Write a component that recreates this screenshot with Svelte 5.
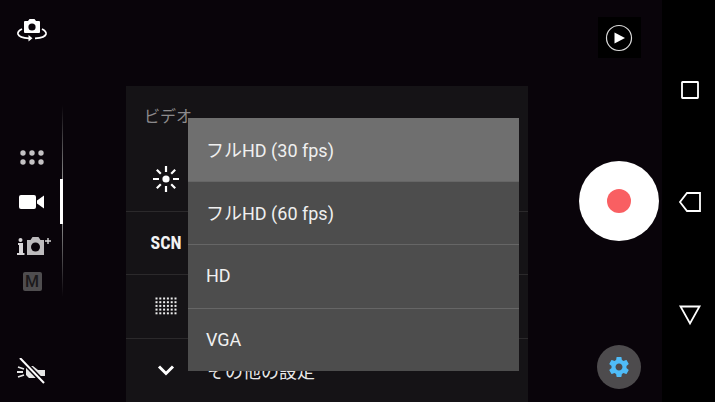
<script>
    const qualities = [
        { label: "フルHD (30 fps)", active: true },
        { label: "フルHD (60 fps)", active: false },
        { label: "HD", active: false },
        { label: "VGA", active: false },
    ];
</script>

<div class="screen">
    <div class="viewfinder">
        <div class="rail">
            <svg class="switch-cam" width="32" height="24" viewBox="0 0 32 24">
                <path d="M9 2h3l1.5-2h5L20 2h3a1 1 0 0 1 1 1v10a1 1 0 0 1-1 1H9a1 1 0 0 1-1-1V3a1 1 0 0 1 1-1z" fill="#fff" />
                <circle cx="16" cy="8" r="3.6" fill="#0a040a" />
                <path d="M6 10C3 11.500 1.500 13 2 15c.8 2.500 6 4 11 4.300M19 19.300c5-.3 10.500-1.800 11-4.300.3-2-1-3.500-4-5" fill="none" stroke="#fff" stroke-width="1.800" />
                <path d="M12.500 16l4 3.300-4 3.200z" fill="#fff" />
            </svg>

            <div class="modes">
                <svg class="mode-grid" width="24" height="16" viewBox="0 0 24 16" fill="#c4c2c4">
                    <circle cx="3" cy="3" r="2.700" /><circle cx="12" cy="3" r="2.700" /><circle cx="21" cy="3" r="2.700" />
                    <circle cx="3" cy="12" r="2.700" /><circle cx="12" cy="12" r="2.700" /><circle cx="21" cy="12" r="2.700" />
                </svg>
                <svg class="mode-video" width="26" height="16" viewBox="0 0 26 16" fill="#fff">
                    <rect x="0" y="1" width="17" height="14" rx="2" />
                    <path d="M18 6.500L25 1.500v13l-7-5z" />
                </svg>
                <svg class="mode-auto" width="36" height="20" viewBox="0 0 36 20">
                    <circle cx="3.500" cy="4" r="2" fill="#d8d6d8" />
                    <path d="M1 7h5v10h1.500v2H0v-2h2V9H1z" fill="#d8d6d8" />
                    <path d="M10 4h3.500l2-3h6l2 3H27v15H10z" fill="#bdbbbd" />
                    <circle cx="18.500" cy="11" r="4.500" fill="#0a040a" />
                    <path d="M31 2v6M28 5h6" stroke="#d8d6d8" stroke-width="1.400" />
                </svg>
                <div class="mode-manual">M</div>
            </div>

            <svg class="flash-off" width="30" height="26" viewBox="0 0 30 26">
                <path d="M9 8h7l5 4h7v6h-7l-3 2h-6l-3-3V8z" fill="#e6e6e6" />
                <path d="M1 9l6 2M0 14h6M1 19l6-2" stroke="#e6e6e6" stroke-width="1.800" />
                <path d="M3 0l24 25" stroke="#0a040a" stroke-width="5" />
                <path d="M3 0l24 25" stroke="#fff" stroke-width="2" />
            </svg>

            <div class="zoom-line"></div>
            <div class="zoom-thumb"></div>
        </div>

        <div class="panel">
            <div class="panel-title">ビデオ</div>
            <div class="panel-row">
                <svg class="row-icon" width="28" height="28" viewBox="0 0 28 28" stroke="#fff" stroke-width="2.200">
                    <circle cx="14" cy="14" r="3.600" fill="#fff" stroke="none" />
                    <path d="M14 1v6M14 21v6M1 14h6M21 14h6M4.800 4.800l4 4M19.200 19.200l4 4M4.800 23.200l4-4M19.200 8.800l4-4" />
                </svg>
            </div>
            <div class="panel-row">
                <span class="scn">SCN</span>
            </div>
            <div class="panel-row">
                <svg class="row-icon" width="22" height="18" viewBox="0 0 22 18" fill="#eee">
                    {#each [0, 1, 2, 3, 4] as r}
                        {#each [0, 1, 2, 3, 4, 5] as c}
                            <rect x={c * 3.800 + 0.500} y={r * 3.700 + 0.500} width="2" height="2" />
                        {/each}
                    {/each}
                </svg>
            </div>
            <div class="panel-row last">
                <svg class="row-icon" width="18" height="12" viewBox="0 0 18 12">
                    <path d="M2 2.500l7 7 7-7" fill="none" stroke="#fff" stroke-width="3" />
                </svg>
                <span class="row-label">その他の設定</span>
            </div>

            <div class="dropdown">
                {#each qualities as q}
                    <div class="option" class:active={q.active}>{q.label}</div>
                {/each}
            </div>
        </div>

        <div class="controls">
            <div class="play-box">
                <svg width="28" height="28" viewBox="0 0 28 28">
                    <circle cx="14" cy="14" r="12.500" fill="none" stroke="#dcdcdc" stroke-width="1.200" />
                    <path d="M9.500 8.500L20 14 9.500 19.500z" fill="#fff" />
                </svg>
            </div>
            <div class="record"><div class="record-dot"></div></div>
            <div class="settings">
                <svg width="24" height="24" viewBox="0 0 24 24">
                    <path fill="#4fbcf8" d="M19.430 12.980c.04-.32.07-.64.07-.98s-.03-.66-.07-.98l2.110-1.650c.19-.15.24-.42.12-.64l-2-3.460c-.12-.22-.39-.3-.61-.22l-2.490 1c-.52-.4-1.080-.73-1.690-.98l-.38-2.650C14.460 2.180 14.250 2 14 2h-4c-.25 0-.46.18-.49.420l-.38 2.650c-.61.250-1.170.590-1.690.980l-2.490-1c-.23-.090-.49 0-.61.220l-2 3.460c-.13.220-.07.490.12.640l2.110 1.650c-.04.320-.07.650-.07.980s.03.660.07.980l-2.110 1.650c-.19.150-.24.420-.12.640l2 3.460c.12.220.39.300.61.220l2.490-1c.52.400 1.080.730 1.690.980l.38 2.650c.03.240.24.420.49.420h4c.25 0 .46-.18.49-.42l.38-2.650c.61-.250 1.170-.590 1.690-.980l2.490 1c.23.090.49 0 .61-.22l2-3.460c.12-.22.07-.49-.12-.64l-2.110-1.650zM12 15.500c-1.930 0-3.500-1.570-3.500-3.500s1.570-3.500 3.500-3.500 3.500 1.570 3.500 3.500-1.570 3.500-3.500 3.500z" />
                </svg>
            </div>
        </div>
    </div>

    <div class="navbar">
        <svg width="20" height="20" viewBox="0 0 20 20">
            <rect x="2" y="2" width="16" height="16" rx="0.500" fill="none" stroke="#fff" stroke-width="1.800" />
        </svg>
        <svg width="24" height="22" viewBox="0 0 24 22">
            <path d="M22 2H9L2 11l7 9h13z" fill="none" stroke="#fff" stroke-width="1.800" />
        </svg>
        <svg width="24" height="22" viewBox="0 0 24 22">
            <path d="M2.500 2.500h19L12 19.500z" fill="none" stroke="#fff" stroke-width="1.800" />
        </svg>
    </div>
</div>

<style>
    :global(body) {
        margin: 0;
        background: #000;
    }

    .screen {
        display: flex;
        width: 715px;
        height: 402px;
        overflow: hidden;
        font-family: Roboto, "Noto Sans CJK JP", sans-serif;
    }

    .viewfinder {
        display: flex;
        flex: 1;
        background: #09040a;
    }

    .rail {
        position: relative;
        display: flex;
        flex-direction: column;
        align-items: center;
        width: 64px;
        margin-right: 62px;
        box-sizing: border-box;
        padding-top: 19px;
    }

    .modes {
        display: flex;
        flex-direction: column;
        align-items: center;
        margin-top: 107px;
    }

    .mode-grid {
        margin-bottom: 28px;
    }

    .mode-video {
        margin-bottom: 26px;
    }

    .mode-auto {
        margin-left: 6px;
        margin-bottom: 16px;
    }

    .mode-manual {
        display: flex;
        align-items: center;
        justify-content: center;
        width: 19px;
        height: 19px;
        border-radius: 2px;
        background: #4f4d4f;
        color: #1b191b;
        font-size: 16px;
        font-weight: 500;
    }

    .flash-off {
        margin-top: auto;
        margin-bottom: 18px;
    }

    .zoom-line {
        position: absolute;
        left: 62px;
        top: 105px;
        width: 1px;
        height: 192px;
        background: linear-gradient(#09040a, #8e8e8e 40%, #8e8e8e 60%, #09040a);
    }

    .zoom-thumb {
        position: absolute;
        left: 60px;
        top: 179px;
        width: 3px;
        height: 45px;
        background: #fff;
    }

    .panel {
        position: relative;
        display: flex;
        flex-direction: column;
        width: 402px;
        margin-top: 86px;
        background: #151316;
    }

    .panel-title {
        height: 64px;
        padding: 21px 0 0 18px;
        box-sizing: border-box;
        color: #8c8a8c;
        font-size: 16px;
        line-height: 20px;
    }

    .panel-row {
        display: flex;
        align-items: center;
        height: 63.500px;
        flex: none;
        box-sizing: border-box;
        border-bottom: 1px solid #2b292b;
        padding-left: 40px;
        color: #fff;
    }

    .panel-row.last {
        border-bottom: none;
    }

    .row-icon {
        flex: none;
        transform: translateX(-50%);
    }

    .scn {
        transform: translateX(-50%);
        font-size: 18px;
        font-weight: 700;
        font-stretch: condensed;
        color: #f2f2f2;
    }

    .row-label {
        margin-left: 23px;
        font-size: 18px;
        color: #e8e8e8;
    }

    .dropdown {
        position: absolute;
        left: 62px;
        top: 32px;
        display: flex;
        flex-direction: column;
        width: 331px;
        height: 253px;
        background: #4d4d4d;
    }

    .option {
        flex: 1;
        display: flex;
        align-items: center;
        padding: 0 0 1px 18px;
        border-top: 1px solid #666;
        color: #f0f0f0;
        font-size: 18px;
    }

    .option:first-child {
        border-top: none;
    }

    .option.active {
        background: #6f6f6f;
        border-bottom: 1px solid #666;
    }

    .option.active + .option {
        border-top: none;
    }

    .controls {
        display: flex;
        flex-direction: column;
        align-items: center;
        flex: 1;
        padding: 17px 0 13px 48px;
        box-sizing: border-box;
        height: 402px;
    }

    .play-box {
        display: flex;
        align-items: center;
        justify-content: center;
        width: 43px;
        height: 41px;
        background: #000;
    }

    .record {
        display: flex;
        align-items: center;
        justify-content: center;
        width: 80px;
        height: 80px;
        margin-top: 103px;
        border-radius: 50%;
        background: #fff;
    }

    .record-dot {
        width: 24px;
        height: 24px;
        border-radius: 50%;
        background: #f95f62;
    }

    .settings {
        display: flex;
        align-items: center;
        justify-content: center;
        width: 44px;
        height: 44px;
        margin-top: auto;
        border-radius: 50%;
        background: #4d4b4d;
    }

    .navbar {
        display: flex;
        flex-direction: column;
        align-items: center;
        gap: 91px;
        width: 53px;
        padding: 80px 0 0 3px;
        box-sizing: border-box;
        background: #000;
    }
</style>
